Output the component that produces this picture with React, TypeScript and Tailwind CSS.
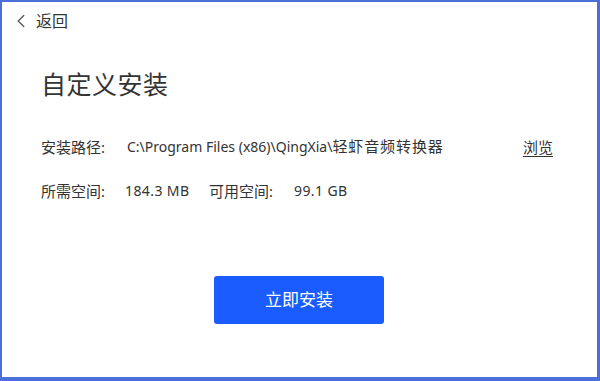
import { ChevronLeft } from 'lucide-react';

const font = { fontFamily: '"Noto Sans", "Noto Sans CJK SC", sans-serif' };

export default function App() {
  return (
    <div
      className="h-[381px] w-[600px] border-t-2 border-l-2 border-r-[3px] border-b-4 border-[#4b6fd9] bg-white text-[#333333]"
      style={font}
    >
      {/* Header */}
      <div className="flex items-center gap-[4px] pl-[8px] pt-[8px]">
        <ChevronLeft className="h-[22px] w-[22px] text-[#555555]" strokeWidth={1.4} />
        <span className="text-[16px] leading-[22px]">返回</span>
      </div>

      <div className="pl-[39px]">
        <h1 className="mt-[35px] text-[25px] leading-[34px] tracking-[0.5px]">自定义安装</h1>

        <div className="mt-[35px] flex items-center text-[14px] leading-[20px]">
          <span className="w-[86px] text-[15px]">安装路径:</span>
          <span>
            C:\Program Files (x86)\QingXia\
            <span className="text-[15px] tracking-[0.9px]">轻虾音频转换器</span>
          </span>
          <span className="ml-auto mr-[44px] text-[15px] underline underline-offset-[3px]">浏览</span>
        </div>

        <div className="mt-[24px] flex items-center text-[14px] leading-[20px]">
          <span className="w-[84px] text-[15px]">所需空间:</span>
          <span className="w-[84px] tracking-[0.4px]">184.3 MB</span>
          <span className="w-[85px] text-[15px]">可用空间:</span>
          <span className="tracking-[0.4px]">99.1 GB</span>
        </div>
      </div>

      <div className="mt-[75px] flex justify-center pr-[1px]">
        <button className="h-[48px] w-[170px] rounded-[3px] bg-[#1a5cff] text-[17px] text-white">
          立即安装
        </button>
      </div>
    </div>
  );
}
